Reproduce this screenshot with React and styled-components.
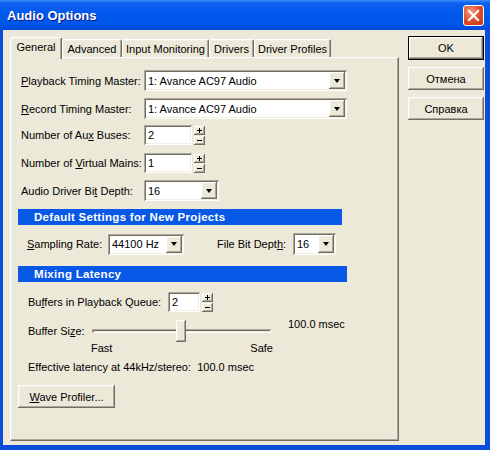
import React from "react";
import styled, { createGlobalStyle } from "styled-components";

const FACE = "#ECE9D8";
const LIGHT = "#F1EFE2";
const SHADOW = "#ACA899";
const DARK = "#716F64";
const FRAME = "#0A4CDB";

const GlobalStyle = createGlobalStyle`
  html, body {
    margin: 0;
    padding: 0;
    background: #ffffff;
  }
  body {
    font-family: "Liberation Sans", Arial, sans-serif;
    font-size: 11px;
    color: #000;
  }
  * {
    box-sizing: border-box;
  }
`;

const raised = `
  background: ${FACE};
  box-shadow: inset -1px -1px ${DARK}, inset 1px 1px #ffffff,
    inset -2px -2px ${SHADOW}, inset 2px 2px ${LIGHT};
`;

const sunken = `
  box-shadow: inset 1px 1px ${SHADOW}, inset -1px -1px #ffffff,
    inset 2px 2px ${DARK}, inset -2px -2px ${LIGHT};
`;

const Window = styled.div`
  width: 490px;
  height: 450px;
  display: flex;
  flex-direction: column;
  background: ${FRAME};
`;

const TitleBar = styled.div`
  height: 30px;
  flex: none;
  display: flex;
  align-items: center;
  justify-content: space-between;
  padding: 0 6px 0 7px;
  background: linear-gradient(
    180deg,
    #3d8ef9 0px,
    #0d60ee 3px,
    #0058ee 14px,
    #0256ea 24px,
    #0049d6 30px
  );
`;

const Title = styled.span`
  font-family: "Liberation Sans", Arial, sans-serif;
  font-weight: bold;
  font-size: 13px;
  color: #ffffff;
  text-shadow: 1px 1px #0a1883;
`;

const CloseButton = styled.div`
  width: 21px;
  height: 21px;
  border: 1px solid #ffffff;
  border-radius: 3px;
  background: radial-gradient(circle at 35% 30%, #f29a7c, #dc4a22 55%, #c43813);
  display: flex;
  align-items: center;
  justify-content: center;
`;

const Body = styled.div`
  flex: 1;
  display: flex;
  gap: 9px;
  background: ${FACE};
  border-left: 3px solid ${FRAME};
  border-right: 5px solid ${FRAME};
  border-bottom: 5px solid ${FRAME};
  padding: 7px 1px 3px 7px;
`;

const LeftColumn = styled.div`
  width: 389px;
  display: flex;
  flex-direction: column;
`;

const TabStrip = styled.div`
  height: 20px;
  display: flex;
  align-items: flex-end;
  position: relative;
  z-index: 1;
`;

const Tab = styled.div`
  width: ${(p) => p.$w}px;
  height: ${(p) => (p.$active ? 22 : 18)}px;
  margin-bottom: ${(p) => (p.$active ? -2 : 0)}px;
  display: flex;
  align-items: center;
  justify-content: center;
  padding-bottom: ${(p) => (p.$active ? 3 : 0)}px;
  background: ${FACE};
  border-top: 1px solid #ffffff;
  border-left: 1px solid #ffffff;
  border-right: 1px solid ${DARK};
  border-radius: 2px 2px 0 0;
  box-shadow: inset -1px 0 ${SHADOW}, inset 1px 1px ${LIGHT};
  white-space: nowrap;
`;

const Panel = styled.div`
  height: 384px;
  display: flex;
  flex-direction: column;
  padding-left: 7px;
  background: ${FACE};
  border-top: 1px solid #ffffff;
  border-left: 1px solid #ffffff;
  border-right: 1px solid ${DARK};
  border-bottom: 1px solid ${DARK};
  box-shadow: inset -1px -1px ${SHADOW}, inset 1px 1px ${LIGHT};
`;

const Row = styled.div`
  display: flex;
  align-items: center;
  height: ${(p) => p.$h}px;
  margin-top: ${(p) => p.$top}px;
  padding-left: ${(p) => p.$indent || 0}px;
`;

const Label = styled.span`
  width: ${(p) => p.$w}px;
  margin-left: ${(p) => p.$gap || 0}px;
  flex: none;
  white-space: nowrap;
`;

const Key = styled.span`
  text-decoration: underline;
`;

const Field = styled.div`
  width: ${(p) => p.$w}px;
  height: ${(p) => p.$h || 21}px;
  flex: none;
  display: flex;
  align-items: center;
  justify-content: space-between;
  padding: 2px 2px 2px 4px;
  background: #ffffff;
  ${sunken}
`;

const DropButton = styled.div`
  width: 16px;
  height: 100%;
  display: flex;
  align-items: center;
  justify-content: center;
  ${raised}

  &::after {
    content: "";
    border-left: 3.5px solid transparent;
    border-right: 3.5px solid transparent;
    border-top: 4px solid #000;
  }
`;

const SpinBox = styled.div`
  display: flex;
  flex-direction: column;
  gap: 1px;
  margin-left: 2px;
`;

const SpinButton = styled.div`
  width: 11px;
  height: 9px;
  display: flex;
  align-items: center;
  justify-content: center;
  ${raised}
`;

const Header = styled.div`
  width: ${(p) => p.$w}px;
  height: 16px;
  display: flex;
  align-items: center;
  padding-left: 16px;
  background: #0758e6;
  color: #ffffff;
  font-weight: bold;
  font-size: 11.5px;
  letter-spacing: 0.3px;
`;

const SliderTrack = styled.div`
  position: relative;
  width: 179px;
  height: 22px;
  flex: none;

  &::before {
    content: "";
    position: absolute;
    left: 0;
    right: 0;
    top: 9px;
    height: 4px;
    box-shadow: inset 1px 1px ${SHADOW}, inset -1px -1px #ffffff,
      inset 2px 2px ${DARK};
  }
`;

const SliderThumb = styled.div`
  position: absolute;
  top: 0;
  width: 10px;
  height: 22px;
  ${raised}
`;

const Value = styled.span`
  margin-left: 17px;
  align-self: flex-start;
  margin-top: -2px;
`;

const ScaleLabels = styled.div`
  width: 182px;
  display: flex;
  justify-content: space-between;
`;

const PushButton = styled.div`
  width: ${(p) => p.$w || 76}px;
  height: ${(p) => p.$h || 23}px;
  flex: none;
  display: flex;
  align-items: center;
  justify-content: center;
  ${raised}
  ${(p) => (p.$default ? "border: 1px solid #000;" : "")}
`;

const ButtonColumn = styled.div`
  width: 76px;
  margin-top: -1px;
  display: flex;
  flex-direction: column;
  gap: 7px;
`;

function Select({ width, height, value }) {
  return (
    <Field $w={width} $h={height}>
      <span>{value}</span>
      <DropButton />
    </Field>
  );
}

function Spin({ width, value }) {
  return (
    <>
      <Field $w={width} $h={20}>
        <span>{value}</span>
      </Field>
      <SpinBox>
        <SpinButton>
          <svg width="5" height="5" viewBox="0 0 5 5">
            <path d="M0 2.5h5M2.5 0v5" stroke="#000" strokeWidth="1" />
          </svg>
        </SpinButton>
        <SpinButton>
          <svg width="5" height="5" viewBox="0 0 5 5">
            <path d="M0 2.5h5" stroke="#000" strokeWidth="1" />
          </svg>
        </SpinButton>
      </SpinBox>
    </>
  );
}

const TABS = [
  { name: "General", w: 52 },
  { name: "Advanced", w: 60 },
  { name: "Input Monitoring", w: 87 },
  { name: "Drivers", w: 45 },
  { name: "Driver Profiles", w: 77 },
];

export default function App() {
  const buffer = 0.47;

  return (
    <>
      <GlobalStyle />
      <Window>
        <TitleBar>
          <Title>Audio Options</Title>
          <CloseButton>
            <svg width="13" height="13" viewBox="0 0 13 13">
              <path
                d="M2 2L11 11M11 2L2 11"
                stroke="#ffffff"
                strokeWidth="2.2"
                strokeLinecap="square"
              />
            </svg>
          </CloseButton>
        </TitleBar>
        <Body>
          <LeftColumn>
            <TabStrip>
              {TABS.map((t, i) => (
                <Tab key={t.name} $w={t.w} $active={i === 0}>
                  {t.name}
                </Tab>
              ))}
            </TabStrip>
            <Panel>
              <Row $h={21} $top={12} $indent={3}>
                <Label $w={123}>
                  <Key>P</Key>layback Timing Master:
                </Label>
                <Select width={203} value="1: Avance AC97 Audio" />
              </Row>
              <Row $h={21} $top={7} $indent={3}>
                <Label $w={123}>
                  <Key>R</Key>ecord Timing Master:
                </Label>
                <Select width={203} value="1: Avance AC97 Audio" />
              </Row>
              <Row $h={20} $top={6} $indent={3}>
                <Label $w={123}>
                  Number of Au<Key>x</Key> Buses:
                </Label>
                <Spin width={48} value="2" />
              </Row>
              <Row $h={20} $top={8} $indent={3}>
                <Label $w={123}>
                  Number of <Key>V</Key>irtual Mains:
                </Label>
                <Spin width={48} value="1" />
              </Row>
              <Row $h={21} $top={7} $indent={3}>
                <Label $w={123}>
                  Audio Driver Bi<Key>t</Key> Depth:
                </Label>
                <Select width={75} value="16" />
              </Row>

              <Row $h={16} $top={8}>
                <Header $w={324}>Default Settings for New Projects</Header>
              </Row>
              <Row $h={22} $top={8} $indent={9}>
                <Label $w={81}>
                  <Key>S</Key>ampling Rate:
                </Label>
                <Select width={76} height={21} value="44100 Hz" />
                <Label $w={76} $gap={33}>
                  File Bit Dept<Key>h</Key>:
                </Label>
                <Select width={43} height={22} value="16" />
              </Row>

              <Row $h={16} $top={11}>
                <Header $w={329}>Mixing Latency</Header>
              </Row>
              <Row $h={20} $top={10} $indent={10}>
                <Label $w={140}>
                  Bu<Key>f</Key>fers in Playback Queue:
                </Label>
                <Spin width={32} value="2" />
              </Row>
              <Row $h={22} $top={8} $indent={10}>
                <Label $w={64}>
                  Buffer Si<Key>z</Key>e:
                </Label>
                <SliderTrack>
                  <SliderThumb style={{ left: `${Math.round(buffer * 179)}px` }} />
                </SliderTrack>
                <Value>100.0 msec</Value>
              </Row>
              <Row $h={12} $top={0} $indent={73}>
                <ScaleLabels>
                  <span>Fast</span>
                  <span>Safe</span>
                </ScaleLabels>
              </Row>
              <Row $h={13} $top={6} $indent={10}>
                <span>Effective latency at 44kHz/stereo:&nbsp; 100.0 msec</span>
              </Row>
              <Row $h={23} $top={12}>
                <PushButton $w={97}>
                  <span>
                    <Key>W</Key>ave Profiler...
                  </span>
                </PushButton>
              </Row>
            </Panel>
          </LeftColumn>
          <ButtonColumn>
            <PushButton $h={24} $default>
              OK
            </PushButton>
            <PushButton>Отмена</PushButton>
            <PushButton>Справка</PushButton>
          </ButtonColumn>
        </Body>
      </Window>
    </>
  );
}
